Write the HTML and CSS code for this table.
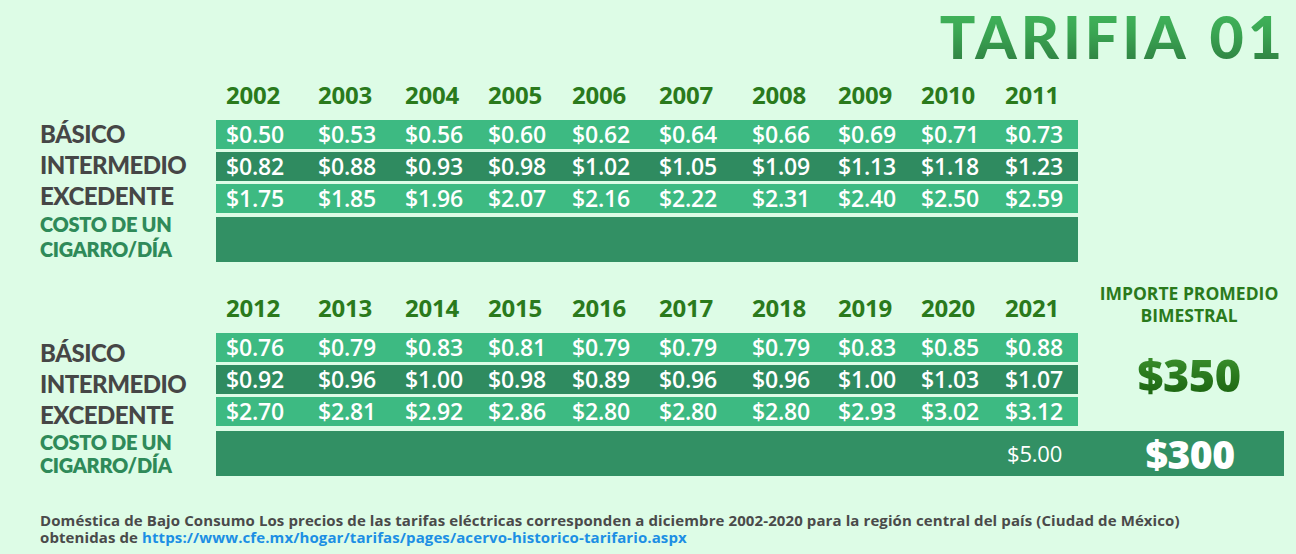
FILE: index.html
```html
<!DOCTYPE html>
<html lang="es">
<head>
<meta charset="utf-8">
<title>Tarifia 01</title>
<link rel="stylesheet" href="styles.css">
</head>
<body>
<main class="page">
  <h1 class="title">TARIFIA 01</h1>

  <section class="block block-1">
    <div class="labels">
      <div class="label">BÁSICO</div>
      <div class="label">INTERMEDIO</div>
      <div class="label">EXCEDENTE</div>
      <div class="label-sub">COSTO DE UN<br>CIGARRO/DÍA</div>
    </div>
    <div class="table">
      <div class="row years">
        <span>2002</span><span>2003</span><span>2004</span><span>2005</span><span>2006</span><span>2007</span><span>2008</span><span>2009</span><span>2010</span><span>2011</span>
      </div>
      <div class="row light">
        <span>$0.50</span><span>$0.53</span><span>$0.56</span><span>$0.60</span><span>$0.62</span><span>$0.64</span><span>$0.66</span><span>$0.69</span><span>$0.71</span><span>$0.73</span>
      </div>
      <div class="row dark">
        <span>$0.82</span><span>$0.88</span><span>$0.93</span><span>$0.98</span><span>$1.02</span><span>$1.05</span><span>$1.09</span><span>$1.13</span><span>$1.18</span><span>$1.23</span>
      </div>
      <div class="row light">
        <span>$1.75</span><span>$1.85</span><span>$1.96</span><span>$2.07</span><span>$2.16</span><span>$2.22</span><span>$2.31</span><span>$2.40</span><span>$2.50</span><span>$2.59</span>
      </div>
    </div>
    <div class="row cig"></div>
  </section>

  <section class="block block-2">
    <div class="labels">
      <div class="label">BÁSICO</div>
      <div class="label">INTERMEDIO</div>
      <div class="label">EXCEDENTE</div>
      <div class="label-sub">COSTO DE UN<br>CIGARRO/DÍA</div>
    </div>
    <div class="table">
      <div class="row years">
        <span>2012</span><span>2013</span><span>2014</span><span>2015</span><span>2016</span><span>2017</span><span>2018</span><span>2019</span><span>2020</span><span>2021</span>
      </div>
      <div class="row light">
        <span>$0.76</span><span>$0.79</span><span>$0.83</span><span>$0.81</span><span>$0.79</span><span>$0.79</span><span>$0.79</span><span>$0.83</span><span>$0.85</span><span>$0.88</span>
      </div>
      <div class="row dark">
        <span>$0.92</span><span>$0.96</span><span>$1.00</span><span>$0.98</span><span>$0.89</span><span>$0.96</span><span>$0.96</span><span>$1.00</span><span>$1.03</span><span>$1.07</span>
      </div>
      <div class="row light">
        <span>$2.70</span><span>$2.81</span><span>$2.92</span><span>$2.86</span><span>$2.80</span><span>$2.80</span><span>$2.80</span><span>$2.93</span><span>$3.02</span><span>$3.12</span>
      </div>
    </div>
    <div class="summary">
      <div class="summary-title">IMPORTE PROMEDIO<br>BIMESTRAL</div>
      <div class="summary-amount">$350</div>
    </div>
    <div class="row cig wide">
      <span></span><span></span><span></span><span></span><span></span><span></span><span></span><span></span><span></span>
      <span class="cig-price">$5.00</span>
      <span class="cig-total">$300</span>
    </div>
  </section>

  <p class="note">Doméstica de Bajo Consumo Los precios de las tarifas eléctricas corresponden a diciembre 2002-2020 para la región central del país (Ciudad de México)<br>obtenidas de <a class="link" href="https://www.cfe.mx/hogar/tarifas/pages/acervo-historico-tarifario.aspx">https://www.cfe.mx/hogar/tarifas/pages/acervo-historico-tarifario.aspx</a></p>
</main>
</body>
</html>
```

FILE: styles.css
```css
html, body {
  margin: 0;
  padding: 0;
}

body {
  background: #ddfce6;
  width: 1296px;
  height: 554px;
  overflow: hidden;
  font-family: "Open Sans", "Liberation Sans", sans-serif;
}

.page {
  padding: 5px 0 0 40px;
}

.title {
  margin: 0;
  height: 62px;
  font-family: Lato, "Open Sans", sans-serif;
  font-weight: 900;
  font-size: 59px;
  line-height: 64px;
  letter-spacing: 4px;
  word-spacing: 4px;
  text-align: right;
  padding-right: 10px;
  background: linear-gradient(180deg, #43b95e 0%, #3aa552 45%, #2e7c40 100%);
  -webkit-background-clip: text;
  background-clip: text;
  color: transparent;
}

.block {
  display: grid;
  grid-template-columns: 176px 862px 206px;
  row-gap: 3px;
}

.block-1 {
  margin-top: 13px;
}

.block-2 {
  margin-top: 20px;
}

.labels {
  grid-column: 1;
  grid-row: 1 / span 2;
  display: flex;
  flex-direction: column;
}

.block-1 .labels {
  padding-top: 38px;
}

.block-2 .labels {
  padding-top: 55px;
}

.label {
  font-family: Lato, "Open Sans", sans-serif;
  font-weight: 900;
  font-size: 24px;
  line-height: 31px;
  letter-spacing: -0.5px;
  color: #464646;
}

.label-sub {
  margin-top: 1px;
  font-family: Lato, "Open Sans", sans-serif;
  font-weight: 800;
  font-size: 20px;
  line-height: 25px;
  letter-spacing: -0.3px;
  color: #2f8a59;
}

.block-2 .label-sub {
  line-height: 23px;
}

.table {
  grid-column: 2;
  grid-row: 1;
  display: flex;
  flex-direction: column;
  gap: 3px;
}

.block-2 .table {
  padding-top: 11px;
}

.row {
  display: grid;
  grid-template-columns: 92px 87px 83px 84px 87px 93px 86px 83px 84px 73px;
  padding-left: 10px;
  align-items: center;
  height: 29px;
  color: #ffffff;
  font-size: 23px;
  font-weight: 600;
  line-height: 29px;
  letter-spacing: -0.2px;
}

.years {
  height: 30px;
  line-height: 30px;
  margin-bottom: 7px;
  font-size: 24px;
  font-weight: 700;
  letter-spacing: -0.2px;
  color: #2a7a1c;
}

.light {
  background: #3dba82;
}

.dark {
  background: #2f8b60;
}

.cig {
  grid-column: 2;
  grid-row: 2;
  height: 45px;
  background: #329064;
}

.cig.wide {
  grid-column: 2 / span 2;
  grid-template-columns: 92px 87px 83px 84px 87px 93px 86px 83px 84px 73px 196px;
  height: 45px;
}

.cig-price {
  font-size: 22px;
  font-weight: 500;
  padding-left: 2px;
}

.cig-total {
  font-size: 39px;
  font-weight: 800;
  line-height: 45px;
  text-align: center;
  padding-left: 28px;
  letter-spacing: -0.5px;
}

.summary {
  grid-column: 3;
  grid-row: 1;
  padding-left: 16px;
  text-align: center;
}

.summary-title {
  font-size: 17.5px;
  font-weight: 700;
  line-height: 22px;
  color: #2a7a1c;
}

.summary-amount {
  margin-top: 26px;
  font-size: 45px;
  font-weight: 800;
  line-height: 46px;
  letter-spacing: -0.5px;
  background: linear-gradient(180deg, #3f9430 0%, #2a7a1e 50%, #1b6210 100%);
  -webkit-background-clip: text;
  background-clip: text;
  color: transparent;
  display: inline-block;
}

.note {
  margin: 35px 0 0;
  font-size: 15px;
  font-weight: 700;
  line-height: 17px;
  color: #4a4a4a;
  letter-spacing: 0.1px;
}

.link {
  color: #1c8fe4;
  text-decoration: none;
}
```
